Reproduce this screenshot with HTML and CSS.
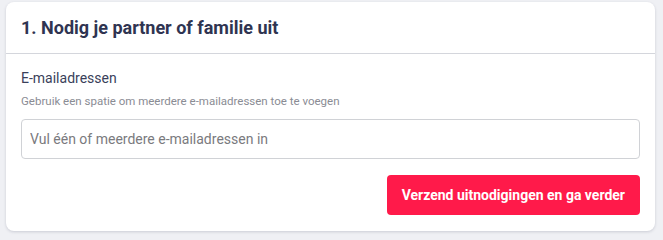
FILE: index.html
```html
<!DOCTYPE html>
<html lang="nl">
<head>
<meta charset="utf-8">
<link rel="stylesheet" href="styles.css">
</head>
<body>
<section class="card">
  <header class="card-header">
    <h2 class="card-title">1. Nodig je partner of familie uit</h2>
  </header>
  <div class="card-body">
    <label class="field-label" for="emails">E-mailadressen</label>
    <p class="field-help">Gebruik een spatie om meerdere e-mailadressen toe te voegen</p>
    <input class="field-input" id="emails" type="text" placeholder="Vul één of meerdere e-mailadressen in">
    <div class="actions">
      <button class="btn-primary" type="button">Verzend uitnodigingen en ga verder</button>
    </div>
  </div>
</section>
</body>
</html>
```
FILE: styles.css
```css
html, body {
  margin: 0;
  padding: 0;
}
body {
  background: #eff0f4;
  font-family: Roboto, "Liberation Sans", sans-serif;
  padding: 2px 8px 8px 6px;
}
.card {
  background: #fff;
  border-radius: 8px;
  box-shadow: 0 1px 3px rgba(40, 45, 70, 0.18);
  height: 229px;
  box-sizing: border-box;
  display: flex;
  flex-direction: column;
}
.card-header {
  height: 51px;
  border-bottom: 1px solid #d4d6dc;
  display: flex;
  align-items: center;
  padding: 0 15px;
}
.card-title {
  margin: 0;
  font-size: 18px;
  font-weight: 700;
  color: #2f3451;
}
.card-body {
  padding: 14px 15px 0 15px;
  display: flex;
  flex-direction: column;
}
.field-label {
  font-size: 14px;
  line-height: 20px;
  color: #3a3f5a;
}
.field-help {
  margin: 5px 0 0 0;
  font-size: 11.5px;
  line-height: 16px;
  color: #8a8c94;
}
.field-input {
  margin-top: 10px;
  height: 40px;
  box-sizing: border-box;
  border: 1px solid #d0d2d6;
  border-radius: 4px;
  padding: 0 8px;
  font-family: Roboto, "Liberation Sans", sans-serif;
  font-size: 14px;
  color: #333;
  outline: none;
}
.field-input::placeholder {
  color: #7a7a7e;
}
.actions {
  display: flex;
  justify-content: flex-end;
  margin-top: 16px;
}
.btn-primary {
  height: 40px;
  padding: 0 15px;
  border: none;
  border-radius: 4px;
  background: #ff1a4a;
  color: #fff;
  font-family: Roboto, "Liberation Sans", sans-serif;
  font-size: 14px;
  font-weight: 700;
  cursor: pointer;
}
```
